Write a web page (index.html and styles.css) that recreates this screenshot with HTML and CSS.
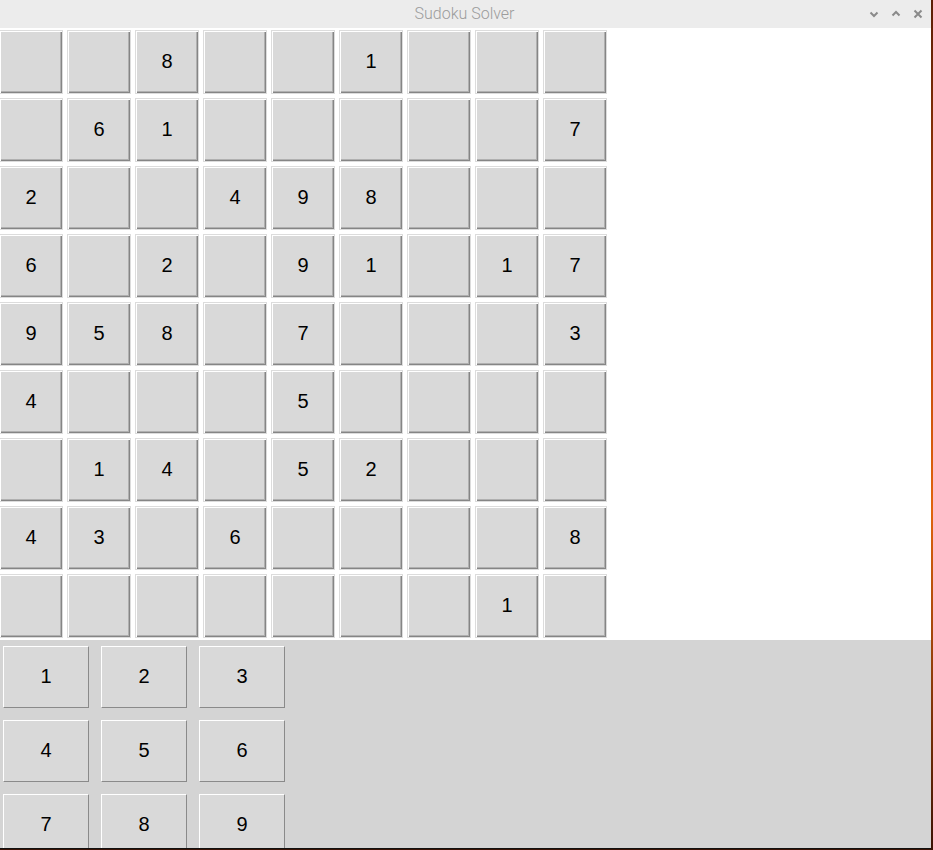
FILE: index.html
```html
<!DOCTYPE html>
<html>
<head>
<meta charset="utf-8">
<title>Sudoku Solver</title>
<link rel="stylesheet" href="styles.css">
</head>
<body>
<div class="window">
  <div class="titlebar">
    <span class="title">Sudoku Solver</span>
    <div class="controls">
      <svg class="ctl" width="10" height="10" viewBox="0 0 10 10"><path d="M1.5 3.5 L5 7 L8.5 3.5" fill="none" stroke="#8a8a8a" stroke-width="2"/></svg>
      <svg class="ctl" width="10" height="10" viewBox="0 0 10 10"><path d="M1.5 6.5 L5 3 L8.5 6.5" fill="none" stroke="#8a8a8a" stroke-width="2"/></svg>
      <svg class="ctl" width="10" height="10" viewBox="0 0 10 10"><path d="M1.5 1.5 L8.5 8.5 M8.5 1.5 L1.5 8.5" fill="none" stroke="#8a8a8a" stroke-width="2"/></svg>
    </div>
  </div>
  <div class="board">
    <div class="grid">
      <div class="cell"></div><div class="cell"></div><div class="cell">8</div><div class="cell"></div><div class="cell"></div><div class="cell">1</div><div class="cell"></div><div class="cell"></div><div class="cell"></div>
      <div class="cell"></div><div class="cell">6</div><div class="cell">1</div><div class="cell"></div><div class="cell"></div><div class="cell"></div><div class="cell"></div><div class="cell"></div><div class="cell">7</div>
      <div class="cell">2</div><div class="cell"></div><div class="cell"></div><div class="cell">4</div><div class="cell">9</div><div class="cell">8</div><div class="cell"></div><div class="cell"></div><div class="cell"></div>
      <div class="cell">6</div><div class="cell"></div><div class="cell">2</div><div class="cell"></div><div class="cell">9</div><div class="cell">1</div><div class="cell"></div><div class="cell">1</div><div class="cell">7</div>
      <div class="cell">9</div><div class="cell">5</div><div class="cell">8</div><div class="cell"></div><div class="cell">7</div><div class="cell"></div><div class="cell"></div><div class="cell"></div><div class="cell">3</div>
      <div class="cell">4</div><div class="cell"></div><div class="cell"></div><div class="cell"></div><div class="cell">5</div><div class="cell"></div><div class="cell"></div><div class="cell"></div><div class="cell"></div>
      <div class="cell"></div><div class="cell">1</div><div class="cell">4</div><div class="cell"></div><div class="cell">5</div><div class="cell">2</div><div class="cell"></div><div class="cell"></div><div class="cell"></div>
      <div class="cell">4</div><div class="cell">3</div><div class="cell"></div><div class="cell">6</div><div class="cell"></div><div class="cell"></div><div class="cell"></div><div class="cell"></div><div class="cell">8</div>
      <div class="cell"></div><div class="cell"></div><div class="cell"></div><div class="cell"></div><div class="cell"></div><div class="cell"></div><div class="cell"></div><div class="cell">1</div><div class="cell"></div>
    </div>
  </div>
  <div class="keypad">
    <div class="key">1</div><div class="key">2</div><div class="key">3</div>
    <div class="key">4</div><div class="key">5</div><div class="key">6</div>
    <div class="key">7</div><div class="key">8</div><div class="key">9</div>
  </div>
</div>
</body>
</html>
```
FILE: styles.css
```css
html, body {
  margin: 0;
  padding: 0;
}
body {
  width: 933px;
  height: 850px;
  overflow: hidden;
  background: linear-gradient(180deg, #5a1e06 0%, #c24a0a 40%, #e0640e 60%, #3a1204 100%);
  font-family: "Liberation Sans", Arial, sans-serif;
}
.window {
  width: 931px;
  height: 848px;
  background: #ffffff;
  display: flex;
  flex-direction: column;
  overflow: hidden;
  border-bottom: 1px solid #111;
}
.titlebar {
  height: 28px;
  flex: 0 0 28px;
  background: #ececec;
  position: relative;
  display: flex;
  align-items: center;
  justify-content: center;
}
.title {
  font-family: Roboto, "Noto Sans", sans-serif;
  font-weight: 300;
  font-size: 16px;
  color: #9c9c9c;
  margin-left: -2px;
  padding-bottom: 2px;
}
.controls {
  position: absolute;
  right: 8px;
  top: 9px;
  display: flex;
  gap: 12px;
}
.ctl {
  display: block;
}
.board {
  flex: 0 0 auto;
  background: #ffffff;
  margin-left: -3px;
}
.grid {
  display: grid;
  grid-template-columns: repeat(9, 64px);
  grid-auto-rows: 64px;
  gap: 4px;
  padding: 2px;
  width: max-content;
}
.cell {
  box-sizing: border-box;
  width: 64px;
  height: 64px;
  background: #d9d9d9;
  border: 1px solid #dcdcdc;
  box-shadow: inset 1px 1px 0 #ffffff, inset -1px -1px 0 #858585, inset -2px -2px 0 #b0b0b0;
  display: flex;
  align-items: center;
  justify-content: center;
  padding-bottom: 2px;
  font-size: 20px;
  color: #000;
}
.keypad {
  flex: 1 1 auto;
  background: #d4d4d4;
  display: grid;
  grid-template-columns: repeat(3, 86px);
  grid-auto-rows: 62px;
  column-gap: 12px;
  row-gap: 12px;
  padding: 6px 0 0 3px;
  overflow: hidden;
}
.key {
  box-sizing: border-box;
  background: #d9d9d9;
  border-top: 1px solid #ffffff;
  border-left: 1px solid #ffffff;
  border-right: 1px solid #8a8a8a;
  border-bottom: 1px solid #8a8a8a;
  display: flex;
  align-items: center;
  justify-content: center;
  padding-bottom: 2px;
  font-size: 20px;
  color: #000;
}
```
